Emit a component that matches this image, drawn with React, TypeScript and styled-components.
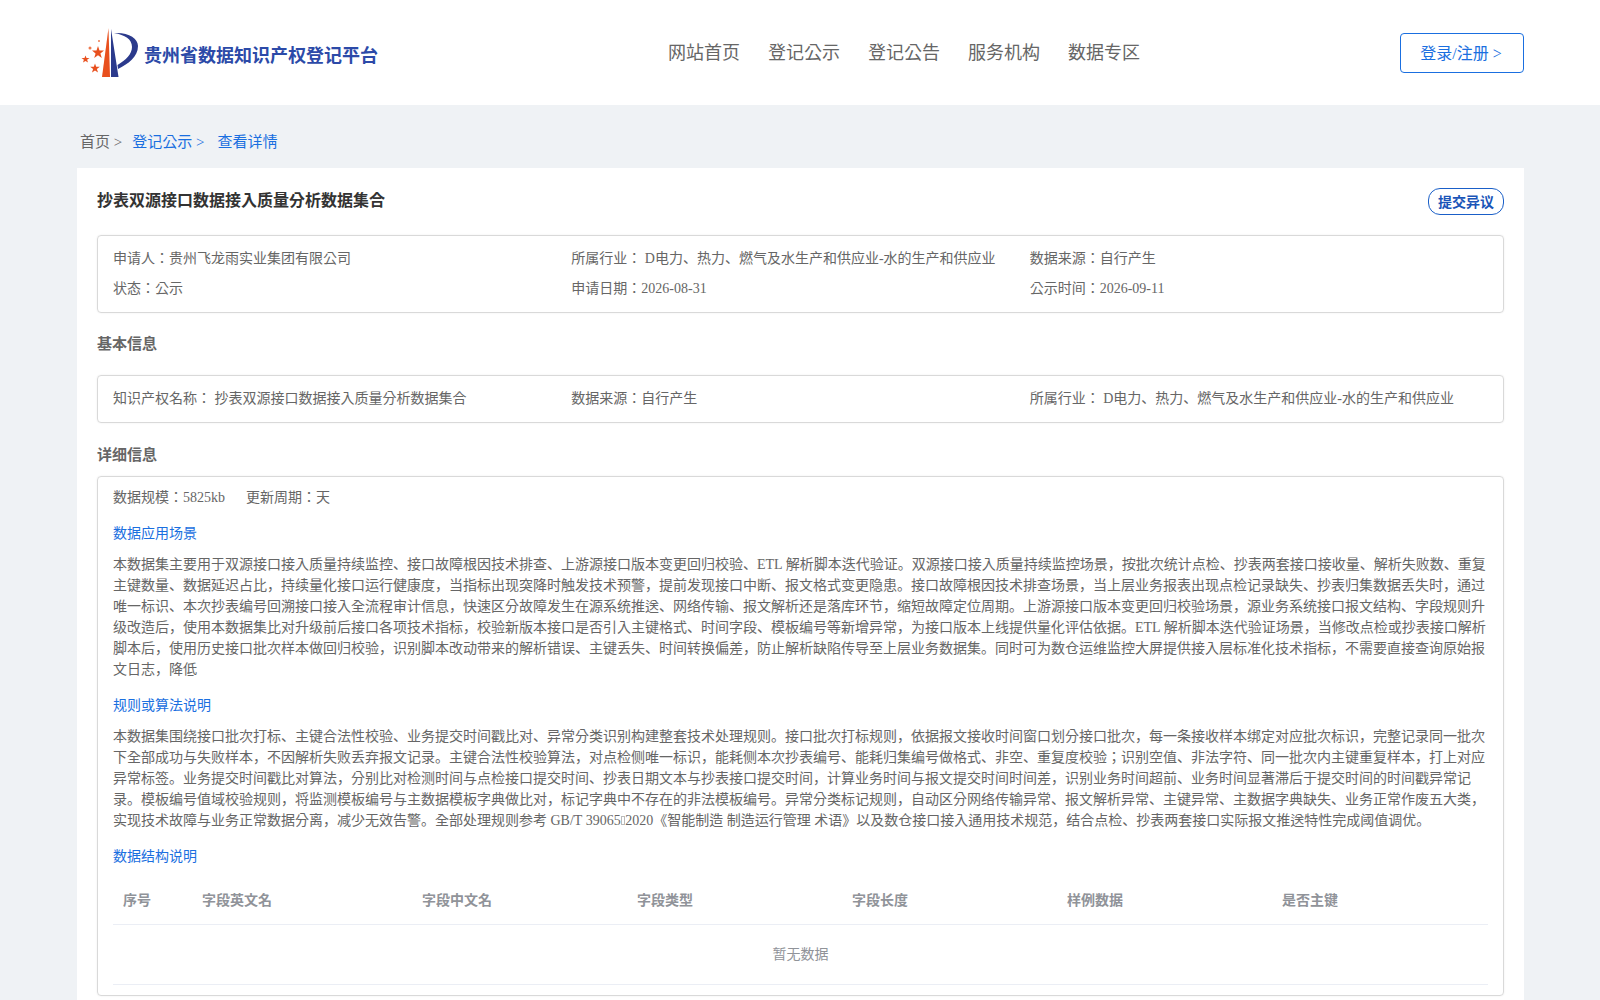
import * as React from 'react'
import styled, { createGlobalStyle } from 'styled-components'

const GlobalStyle = createGlobalStyle`
    html, body {
        margin: 0;
        padding: 0;
        background: #eff2f5;
        font-family: "Liberation Serif", "Noto Sans CJK KR", serif;
        color: #666;
        font-size: 14px;
    }
    html {
        overflow: hidden;
        height: 1000px;
    }
`

const Header = styled.header`
    height: 105px;
    background: #fff;
    padding: 0 76px 0 81px;
    display: grid;
    grid-template-columns: 587px auto 1fr;
    align-items: center;
`

const Logo = styled.div`
    display: flex;
    align-items: center;
    gap: 5px;
`

const LogoText = styled.div`
    font-size: 18px;
    font-weight: 700;
    color: #2c4aa8;
    padding-top: 2px;
`

const Nav = styled.nav`
    display: flex;
    gap: 28px;
    font-size: 18px;
    color: #666;
    padding-bottom: 4px;
`

const LoginWrap = styled.div`
    display: flex;
    justify-content: flex-end;
`

const LoginBtn = styled.div`
    width: 124px;
    height: 40px;
    box-sizing: border-box;
    border: 1px solid #1a6fe0;
    border-radius: 4px;
    padding: 0 2px 2px 0;
    color: #1a6fe0;
    font-size: 16px;
    display: flex;
    align-items: center;
    justify-content: center;
`

const Crumbs = styled.div`
    height: 55px;
    padding: 8px 80px 0;
    display: flex;
    align-items: center;
    font-size: 15px;
`

const Crumb = styled.span<{ $active?: boolean; $gap: number }>`
    color: ${p => (p.$active ? '#1a6fe0' : '#666')};
    margin-right: ${p => p.$gap}px;
`

const Card = styled.main`
    margin: 0 76px 0 77px;
    background: #fff;
    padding: 20px;
`

const TitleRow = styled.div`
    display: flex;
    justify-content: space-between;
    align-items: flex-start;
    margin-bottom: 20px;
`

const Title = styled.h1`
    margin: 0;
    padding-top: 1px;
    font-size: 16px;
    line-height: 24px;
    font-weight: 700;
    color: #333;
`

const Objection = styled.div`
    width: 76px;
    height: 27px;
    box-sizing: border-box;
    border: 1px solid #1a5fc8;
    border-radius: 12px;
    padding-bottom: 2px;
    color: #1a55b8;
    font-size: 14px;
    font-weight: 700;
    display: flex;
    align-items: center;
    justify-content: center;
`

const Box = styled.section`
    border: 1px solid #d9d9d9;
    border-radius: 4px;
    box-shadow: 0 0 2px rgba(0, 0, 0, 0.08);
    padding: 0 15px;
`

const InfoGrid = styled.div`
    display: grid;
    grid-template-columns: repeat(3, 1fr);
    padding: 12px 0 13px;
    row-gap: 9px;
    line-height: 21px;
`

const SectionHead = styled.h2`
    margin: 20px 0;
    font-size: 15px;
    line-height: 22px;
    font-weight: 700;
    color: #666;
`

const DetailHead = styled(SectionHead)`
    margin: 21px 0 10px;
`

const Meta = styled.div`
    display: flex;
    gap: 21px;
    line-height: 21px;
    padding-top: 10px;
`

const SubHead = styled.div`
    color: #1a6fe0;
    line-height: 21px;
    margin: 15px 0 10px;
`

const Para = styled.p`
    margin: 0;
    line-height: 21px;
`

// the source has a character here that its font cannot draw
const MissingGlyph = styled.span`
    display: inline-block;
    width: 4.66px;
    height: 9px;
    box-sizing: border-box;
    border: 1px solid #bbb;
`

const columns = '79px 220px 215px 215px 215px 215px 1fr'

const HeadRow = styled.div`
    display: grid;
    grid-template-columns: ${columns};
    height: 44px;
    padding-bottom: 3px;
    align-items: center;
    border-bottom: 1px solid #ebeef5;
    font-weight: 700;
    color: #909399;
`

const HeadCell = styled.div`
    padding-left: 10px;
`

const Empty = styled.div`
    height: 56px;
    padding-bottom: 3px;
    display: flex;
    align-items: center;
    justify-content: center;
    color: #909399;
    border-bottom: 1px solid #ebeef5;
    margin-bottom: 10px;
`

function LogoMark(): JSX.Element {
    return (
        <svg width="58" height="51" viewBox="0 0 58 51">
            <path d="M21 50 L27.5 1 L29 50 Z" fill="#e8501e" />
            <path d="M30 2 L37.5 50 L30 50 Z" fill="#2b3a8c" />
            <path d="M33 6 C47 5 57 11 57 19 C57 30 47 37 37 42 L36.5 38 C45 33 51 27 51 20 C51 12 44 8 33 6 Z" fill="#2b3a8c" />
            <polygon points="17,19 18.5,23.5 23,23.5 19.4,26.4 20.8,31 17,28.2 13.2,31 14.6,26.4 11,23.5 15.5,23.5" fill="#e8501e" />
            <polygon points="4.5,28.5 5.5,31 8.5,31 6.1,32.8 7,35.5 4.5,34 2,35.5 2.9,32.8 0.5,31 3.5,31" fill="#e8501e" />
            <polygon points="14,36.5 15.2,39.8 18.8,39.8 15.9,42 17,45.5 14,43.5 11,45.5 12.1,42 9.2,39.8 12.8,39.8" fill="#e8501e" />
            <circle cx="9" cy="21" r="1.5" fill="#ee7a50" />
            <circle cx="18" cy="14" r="1" fill="#ee7a50" />
        </svg>
    )
}

const navItems = ['网站首页', '登记公示', '登记公告', '服务机构', '数据专区']
const fields = ['序号', '字段英文名', '字段中文名', '字段类型', '字段长度', '样例数据', '是否主键']
const industry = 'D电力、热力、燃气及水生产和供应业-水的生产和供应业'

export default function App(): JSX.Element {
    return (
        <>
            <GlobalStyle />
            <Header>
                <Logo>
                    <LogoMark />
                    <LogoText>贵州省数据知识产权登记平台</LogoText>
                </Logo>
                <Nav>
                    {navItems.map(item => (
                        <span key={item}>{item}</span>
                    ))}
                </Nav>
                <LoginWrap>
                    <LoginBtn>登录/注册 &gt;</LoginBtn>
                </LoginWrap>
            </Header>

            <Crumbs>
                <Crumb $gap={10}>首页 &gt;</Crumb>
                <Crumb $active $gap={13}>登记公示 &gt;</Crumb>
                <Crumb $active $gap={0}>查看详情</Crumb>
            </Crumbs>

            <Card>
                <TitleRow>
                    <Title>抄表双源接口数据接入质量分析数据集合</Title>
                    <Objection>提交异议</Objection>
                </TitleRow>

                <Box>
                    <InfoGrid>
                        <div>申请人：贵州飞龙雨实业集团有限公司</div>
                        <div>所属行业： {industry}</div>
                        <div>数据来源：自行产生</div>
                        <div>状态：公示</div>
                        <div>申请日期：2026-08-31</div>
                        <div>公示时间：2026-09-11</div>
                    </InfoGrid>
                </Box>

                <SectionHead>基本信息</SectionHead>
                <Box>
                    <InfoGrid>
                        <div>知识产权名称： 抄表双源接口数据接入质量分析数据集合</div>
                        <div>数据来源：自行产生</div>
                        <div>所属行业： {industry}</div>
                    </InfoGrid>
                </Box>

                <DetailHead>详细信息</DetailHead>
                <Box>
                    <Meta>
                        <span>数据规模：5825kb</span>
                        <span>更新周期：天</span>
                    </Meta>
                    <SubHead>数据应用场景</SubHead>
                    <Para>
                        本数据集主要用于双源接口接入质量持续监控、接口故障根因技术排查、上游源接口版本变更回归校验、ETL 解析脚本迭代验证。双源接口接入质量持续监控场景，按批次统计点检、抄表两套接口接收量、解析失败数、重复主键数量、数据延迟占比，持续量化接口运行健康度，当指标出现突降时触发技术预警，提前发现接口中断、报文格式变更隐患。接口故障根因技术排查场景，当上层业务报表出现点检记录缺失、抄表归集数据丢失时，通过唯一标识、本次抄表编号回溯接口接入全流程审计信息，快速区分故障发生在源系统推送、网络传输、报文解析还是落库环节，缩短故障定位周期。上游源接口版本变更回归校验场景，源业务系统接口报文结构、字段规则升级改造后，使用本数据集比对升级前后接口各项技术指标，校验新版本接口是否引入主键格式、时间字段、模板编号等新增异常，为接口版本上线提供量化评估依据。ETL 解析脚本迭代验证场景，当修改点检或抄表接口解析脚本后，使用历史接口批次样本做回归校验，识别脚本改动带来的解析错误、主键丢失、时间转换偏差，防止解析缺陷传导至上层业务数据集。同时可为数仓运维监控大屏提供接入层标准化技术指标，不需要直接查询原始报文日志，降低
                    </Para>
                    <SubHead>规则或算法说明</SubHead>
                    <Para>
                        本数据集围绕接口批次打标、主键合法性校验、业务提交时间戳比对、异常分类识别构建整套技术处理规则。接口批次打标规则，依据报文接收时间窗口划分接口批次，每一条接收样本绑定对应批次标识，完整记录同一批次下全部成功与失败样本，不因解析失败丢弃报文记录。主键合法性校验算法，对点检侧唯一标识，能耗侧本次抄表编号、能耗归集编号做格式、非空、重复度校验；识别空值、非法字符、同一批次内主键重复样本，打上对应异常标签。业务提交时间戳比对算法，分别比对检测时间与点检接口提交时间、抄表日期文本与抄表接口提交时间，计算业务时间与报文提交时间时间差，识别业务时间超前、业务时间显著滞后于提交时间的时间戳异常记录。模板编号值域校验规则，将监测模板编号与主数据模板字典做比对，标记字典中不存在的非法模板编号。异常分类标记规则，自动区分网络传输异常、报文解析异常、主键异常、主数据字典缺失、业务正常作废五大类，实现技术故障与业务正常数据分离，减少无效告警。全部处理规则参考 GB/T 39065<MissingGlyph />2020《智能制造 制造运行管理 术语》以及数仓接口接入通用技术规范，结合点检、抄表两套接口实际报文推送特性完成阈值调优。
                    </Para>
                    <SubHead>数据结构说明</SubHead>
                    <HeadRow>
                        {fields.map(f => (
                            <HeadCell key={f}>{f}</HeadCell>
                        ))}
                    </HeadRow>
                    <Empty>暂无数据</Empty>
                </Box>
            </Card>
        </>
    )
}
